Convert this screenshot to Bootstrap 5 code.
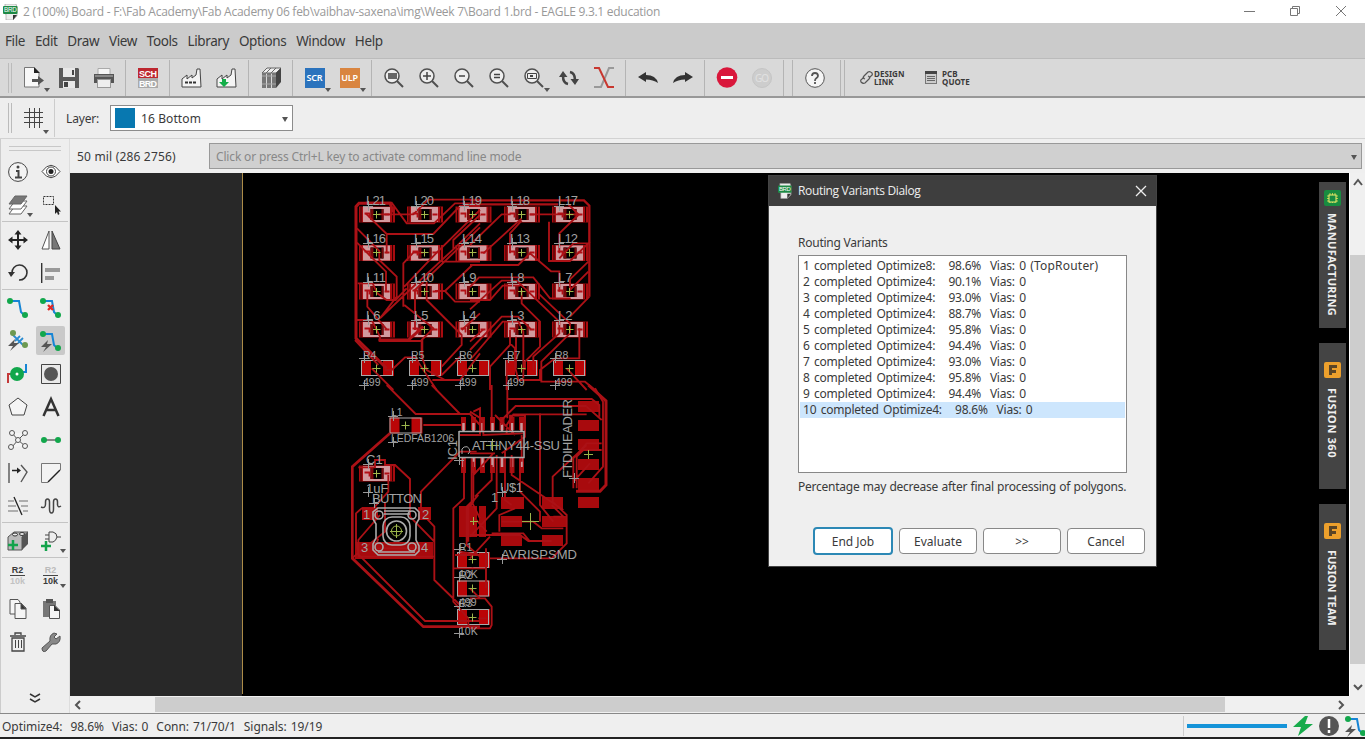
<!DOCTYPE html>
<html lang="en">
<head>
<meta charset="utf-8">
<title>EAGLE board editor</title>
<link href="https://cdn.jsdelivr.net/npm/bootstrap@5.3.0/dist/css/bootstrap.min.css" rel="stylesheet">
<style>
body{width:1365px;height:739px;overflow:hidden;font:12px/16px "Noto Sans","Open Sans",sans-serif;color:#3a3a3a;background:#efefef;white-space:nowrap}
svg{display:block;overflow:visible;flex:none}
.titlebar{height:23px;background:#fff;color:#999;font:12px/23px "Open Sans",sans-serif;padding-left:3px;letter-spacing:-.265px}
.titlebar .cap{width:46px}
.menus{height:36px;background:#cbcbcb;font-size:13.5px;letter-spacing:-.4px;gap:9.9px;padding:0 0 0 5px;border-bottom:1px solid #bbb}
.tools{height:39px;background:#d9d9d9;border-bottom:2px solid #989898}
.tools .cell{width:35px;height:37px;display:flex;align-items:center;justify-content:center;position:relative}
.vsep{width:9px;height:36px;display:flex;justify-content:center}
.vsep::before{content:"";width:1px;background:#b4b4b4}
.grip{width:4px;height:30px;border-left:1px solid #bbb;border-right:1px solid #bbb;margin-left:8px;margin-right:4px}
.drop{position:absolute;right:1px;bottom:4px;width:0;border:3px solid transparent;border-top:4px solid #555;border-bottom:0}
.chip{width:20px;height:20px;color:#fff;font:600 9px/20px "Noto Sans",sans-serif;text-align:center;letter-spacing:-.2px}
.tiny{font:bold 8px/8px "Noto Sans",sans-serif;letter-spacing:.05px}
.layerbar{height:41px;background:#eee;border-bottom:1px solid #d2d2d2}
.layersel{width:183px;height:26px;background:#fff;border:1px solid #8c8c8c;padding:2px 4px 0}
.swatch{width:20px;height:20px;background:#0878b0;margin-top:-2px}
.tri{width:0;border:3px solid transparent;border-top:5px solid #555;border-bottom:0}
.work{height:574px}
.palette{width:70px;border-left:1px solid #ccc;border-right:1px solid #ddd;background:#eee}
.palette .pair{display:grid;grid-template-columns:33px 33px;height:33px}
.palette .pair>div{display:flex;align-items:center;justify-content:center;position:relative}
.palette .active{background:#c9c9c9;border-radius:2px;height:29px;width:29px;margin:2px}
.hsep{height:2px;border-top:1px solid #c4c4c4;margin:0 1px}
.r2{font:bold 9px/10px "Liberation Sans",sans-serif;text-align:center}
.r2 b{display:block;border-bottom:1px solid #444}
.cmdrow{height:34px;background:#efefef}
.cmd{height:26px;width:1153px;background:#d0d0d0;border:1px solid #999;color:#888;padding:2px 4px 0 6px;letter-spacing:-.16px}
.board{width:1279px;height:523px;background:#000;position:relative}
.sidetab{position:absolute;left:1249px;width:27px;height:146px;background:#444;color:#eee;font:bold 11px/27px "Noto Sans",sans-serif;writing-mode:vertical-rl}
.vbar{width:16px;height:523px;background:#f0f0f0;border-left:1px solid #fff}
.vthumb{height:409px;background:#cdcdcd}
.hbar{height:17px;background:#f0f0f0}
.hthumb{width:1070px;height:15px;background:#cdcdcd}
.status{height:26px;border-top:1px solid #888;border-bottom:2px solid #222;background:#efefef;padding-left:2px}
.dlg{position:absolute;left:768px;top:175px;width:389px;height:392px;background:#efefef;border:1px solid #444}
.dlghead{height:30px;background:#3e3e3e;color:#eee;font:12px/30px "Open Sans",sans-serif;padding:0 9px;letter-spacing:-.34px}
.variants{width:329px;height:218px;background:#fff;border:1px solid #888;padding:2px 1px;margin-left:29px;letter-spacing:-.22px;word-spacing:1.5px}
.variants li{height:16px;padding:0 3px;white-space:pre}
.variants .on{background:#cde6fd}
.dlgbtn{width:78px;height:26px;border:1px solid #888;border-radius:4px;background:#fff;font-size:12px;line-height:16px;color:#3a3a3a;padding:1px 0 0}
.dlgbtn.main{border:2px solid #2c88b5;width:80px;height:28px}
.brdtext{font:13px "Liberation Sans",sans-serif;fill:#a2a2a2}
.brdtext .small-label{font-size:10.5px}
</style>
<script src="https://cdn.jsdelivr.net/npm/bootstrap@5.3.0/dist/js/bootstrap.bundle.min.js"></script>
</head>
<body>
<svg width="0" height="0" class="position-absolute">
<defs>
<symbol id="brd" viewBox="0 0 15 16"><path d="M2 0H13L14 3V12L10 16H3V10H2Z" fill="#eee" stroke="#999" stroke-width=".6"/><path d="M14 11H10V16Z" fill="#333"/><rect y="2" width="14.500" height="8" rx="1" fill="#1e8a45"/><text x="1" y="8.300" font-family="Liberation Sans" font-size="6.500" textLength="12.500" lengthAdjust="spacingAndGlyphs" fill="#fff">BRD</text></symbol>
<symbol id="lens" viewBox="0 0 20 20"><circle cx="8" cy="8" r="7" fill="#eee" stroke="#505050" stroke-width="1.5"/><path d="M13 13L19 19" stroke="#505050" stroke-width="2"/></symbol>
<symbol id="plant" viewBox="0 0 21 20"><path d="M1 19V11L6 7V11L11 7V10L15 7L16 1H19L20 19Z" fill="#f4f4f4" stroke="#444"/></symbol>
<g id="led"><rect x="-17.500" y="-8" width="36" height="16" fill="#a80c10"/><path d="M-15.500 -8V8M16 -8V8" stroke="#300"/><rect x="-13.500" y="-7.500" width="27" height="15" fill="#d29a9e"/><rect x="-6" y="-5.500" width="13" height="11"/><path d="M-6 -5.500H-3V5.500H-6ZM5 -5.500H7V5.500H5Z" fill="#7a080b"/></g>
<g id="res"><rect x="-16" y="-8" width="10" height="16" fill="#ba0507"/><rect x="6" y="-8" width="11" height="16" fill="#ba0507"/><rect x="-15.500" y="-7.500" width="31" height="15" fill="none" stroke="#aaa"/></g>
<g id="ledmark"><path d="M-12 -1H-7V3M8 0H13" stroke="#b20f15" stroke-width="1.800" fill="none"/><path d="M-3.500 0H4M0 -3.500V4" stroke="#a4b94c"/></g>
<path id="resmark" d="M-4 0H4M0 -4V4" stroke="#9cb64c"/>
<path id="plus" d="M-5 0.500H5M0.500 -5V5" stroke="#999"/>
<g id="route"><path d="M3 4H12L14 15L19 20" fill="none" stroke="#1685d5" stroke-width="2"/><circle cx="3" cy="4" r="3" fill="#12a74c"/><circle cx="18" cy="18" r="3" fill="#12a74c"/></g>
<path id="bolt" d="M7 0L0 7H5L2 12L11 4H6Z" fill="#555"/>
<g id="ledrow"><use href="#led" x="376.500"/><use href="#led" x="424.500"/><use href="#led" x="473"/><use href="#led" x="521.500"/><use href="#led" x="569.500"/></g>
<g id="markrow"><use href="#ledmark" x="376.500"/><use href="#ledmark" x="424.500"/><use href="#ledmark" x="472.500"/><use href="#ledmark" x="521.500"/><use href="#ledmark" x="569.500"/></g>
<g id="plusrow"><use href="#plus" x="368"/><use href="#plus" x="416"/><use href="#plus" x="464"/><use href="#plus" x="512"/><use href="#plus" x="559"/></g>
</defs></svg>

<header class="titlebar d-flex align-items-center">
 <svg width="15" height="16"><use href="#brd"/></svg>
 <span class="me-auto" style="margin-left:5px">2 (100%) Board - F:\Fab Academy\Fab Academy 06 feb\vaibhav-saxena\img\Week 7\Board 1.brd - EAGLE 9.3.1 education</span>
 <span class="cap"><svg width="46" height="22" stroke="#777" fill="none"><path d="M17 10.500H28"/></svg></span>
 <span class="cap"><svg width="46" height="22" stroke="#777" fill="none"><path d="M17.500 7.500H24.500V14.500H17.500ZM19.500 7V5.500H26.500V12.500H25"/></svg></span>
 <span class="cap"><svg width="46" height="22" stroke="#777" fill="none"><path d="M17 5L27 15M27 5L17 15"/></svg></span>
</header>
<nav class="menus d-flex align-items-center"><span>File</span><span>Edit</span><span>Draw</span><span>View</span><span>Tools</span><span>Library</span><span>Options</span><span>Window</span><span>Help</span></nav>

<div class="tools d-flex align-items-center">
 <div class="grip"></div>
 <div class="cell"><svg width="21" height="21"><path d="M1.500 .5H11L16 6V20H1.500Z" fill="#f8f8f8" stroke="#777"/><path d="M11 0V6H17Z" fill="#222"/><path d="M9 13.500H17" stroke="#555" stroke-width="3"/><path d="M15 9L21 13.500L15 18Z" fill="#555"/></svg><i class="drop"></i></div>
 <div class="cell"><svg width="20" height="20"><path d="M0 0H19L20 1V20H0Z" fill="#595959"/><path d="M4 0H16V9H4ZM4 13H16V20H4Z" fill="#e8e8e8"/><path d="M13 2H15V7H13ZM5 14H9V19H5Z" fill="#444"/></svg></div>
 <div class="cell"><svg width="20" height="20"><path d="M4 .5H16V7H4Z" fill="#f5f5f5" stroke="#aaa"/><path d="M0 6H20V15H0Z" fill="#555"/><path d="M1 7H19V9H1Z" fill="#888"/><path d="M3 11H17V20H3Z" fill="#999"/><path d="M4 12H16V19H4Z" fill="#eee"/></svg></div>
 <div class="vsep"></div>
 <div class="cell"><svg width="20" height="20"><path d="M0 0H20V10H0Z" fill="#bd2730"/><path d="M0 10H20V20H0Z" fill="#aaa"/><g font-family="Liberation Sans" font-weight="bold" font-size="9" fill="#fff"><text x="1" y="8.500" textLength="18">SCH</text><text x="1" y="18.500" textLength="18">BRD</text></g></svg></div>
 <div class="vsep"></div>
 <div class="cell"><svg width="21" height="20"><use href="#plant"/><path d="M4 14.500H16" stroke="#333" stroke-width="2" stroke-dasharray="3 1"/></svg></div>
 <div class="cell"><svg width="21" height="20"><use href="#plant"/><path d="M6 11H10V14H13L8 19L3 14H6Z" fill="#13ae49"/></svg></div>
 <div class="vsep"></div>
 <div class="cell"><svg width="20" height="20"><path d="M1 5L6 0H20L15 5Z" fill="#eee" stroke="#666"/><path d="M1 5H5V20H1ZM6 5H10V20H6ZM11 5H15V20H11Z" fill="#777"/><path d="M15 5L20 0V14L15 20Z" fill="#444"/><path d="M5 5L10 0M10 5L15 0" stroke="#666"/><path d="M1 8H15M1 16H15" stroke="#aaa"/></svg></div>
 <div class="vsep"></div>
 <div class="cell"><div class="chip" style="background:#2b73bd">SCR</div><i class="drop"></i></div>
 <div class="cell"><div class="chip" style="background:#d98540">ULP</div><i class="drop"></i></div>
 <div class="vsep"></div>
 <div class="cell"><svg width="20" height="20"><use href="#lens"/><rect x="4" y="5" width="9" height="6" fill="#666"/></svg></div>
 <div class="cell"><svg width="20" height="20"><use href="#lens"/><path d="M4 8H12M8 4V12" stroke="#444" stroke-width="1.500"/></svg></div>
 <div class="cell"><svg width="20" height="20"><use href="#lens"/><path d="M5 8H11" stroke="#444" stroke-width="1.500"/></svg></div>
 <div class="cell"><svg width="20" height="20"><use href="#lens"/><path d="M5 6.500H11M5 9.500H11" stroke="#444" stroke-width="1.500"/></svg></div>
 <div class="cell"><svg width="20" height="20"><use href="#lens"/><path d="M3.500 5.500H12.500V10.500H3.500Z" stroke="#444" fill="none"/><path d="M6 7H9V9H6Z" fill="#444"/></svg><i class="drop"></i></div>
 <div class="cell"><svg width="20" height="18"><path d="M9 15Q4 14 4 7M11 3Q16 4 16 11" fill="none" stroke="#444" stroke-width="2.600"/><path d="M0 8L4 2L8.500 8ZM11.500 10H20L16 16Z" fill="#444"/></svg></div>
 <div class="cell"><svg width="20" height="21" fill="none"><path d="M20 1H15L7 20H0" stroke="#999" stroke-width="2"/><path d="M0 1H5L14 20H20" stroke="#c8372f" stroke-width="2"/></svg></div>
 <div class="vsep"></div>
 <div class="cell"><svg width="20" height="13"><path d="M0 6L8 1V4Q18 4 20 12Q15 8.500 8 8.500V11Z" fill="#333"/></svg></div>
 <div class="cell"><svg width="20" height="13"><path d="M20 6L12 1V4Q2 4 0 12Q5 8.500 12 8.500V11Z" fill="#333"/></svg></div>
 <div class="vsep"></div>
 <div class="cell"><svg width="20" height="21"><circle cx="10" cy="10.500" r="10.300" fill="#d9173b"/><path d="M4 10.500H16" stroke="#fff" stroke-width="3"/></svg></div>
 <div class="cell"><svg width="20" height="20"><circle cx="10" cy="10" r="9.500" fill="#cdcdcd" stroke="#c5c5c5"/><text x="3" y="14" font-size="10" textLength="14" fill="#e1e1e1">GO</text></svg></div>
 <div class="vsep"></div><div class="vsep"></div>
 <div class="cell"><svg width="20" height="20"><circle cx="10" cy="10" r="9.300" fill="#f5f5f5" stroke="#555"/><path d="M7 8Q7 5 10 5T13 8Q13 9 11 10.500Q10 11 10 13M10 14V16" fill="none" stroke="#555" stroke-width="1.800"/></svg></div>
 <div class="vsep ms-1"></div><div class="vsep" style="margin-left:-5px"></div>
 <svg width="12" height="13" style="margin-left:11px" fill="none" stroke="#555" stroke-width="1.200"><path d="M5 8Q2 7 4 5L8 1Q10 0 12 2Q13 4 11 5L9 7M8 5Q11 6 9 8L5 12Q3 13 1 11Q0 9 2 8L4 6"/></svg>
 <div class="tiny" style="margin-left:2px;width:31px">DESIGN<br>LINK</div>
 <svg width="12" height="13" style="margin-left:20px"><rect x=".5" y=".5" width="11" height="12" fill="#ccc" stroke="#777"/><path d="M0 0H12V3H0Z" fill="#444"/><path d="M2 5.500H10M2 7.500H10M2 9.500H10" stroke="#666"/></svg>
 <div class="tiny" style="margin-left:5px">PCB<br>QUOTE</div>
</div>

<div class="layerbar d-flex align-items-center">
 <div class="grip"></div>
 <div class="position-relative d-flex align-items-center" style="width:39px;height:38px;border-right:1px solid #ccc"><svg width="19" height="21" style="margin-left:8px" stroke="#444"><path d="M5.500 0V20M10.500 0V20M15.500 0V20M0 4.500H19M0 9.500H19M0 14.500H19"/></svg><i class="drop" style="right:5px;bottom:3px"></i></div>
 <span style="margin-left:11px;width:44px;padding-top:2px;letter-spacing:-.15px">Layer:</span>
 <div class="layersel d-flex align-items-center"><div class="swatch"></div><span style="margin-left:6px;letter-spacing:.1px">16 Bottom</span><i class="tri ms-auto"></i></div>
</div>

<main class="work d-flex">
 <aside class="palette">
  <div style="height:16px;padding:7px 8px"><div style="height:5px;border:solid #c8c8c8;border-width:1px 0"></div></div>
  <div class="pair"><div><svg width="20" height="20"><circle cx="10" cy="10" r="9.400" fill="#f3f3f3" stroke="#444"/><circle cx="10" cy="5" r="1.500" fill="#444"/><path d="M8 9H10.500V15M7 15.500H14" stroke="#444" stroke-width="2" fill="none"/></svg></div><div><svg width="20" height="15"><path d="M1 7.500Q10 -5 19 7.500Q10 20 1 7.500Z" fill="#fff" stroke="#444"/><circle cx="10" cy="7.500" r="4.500" fill="none" stroke="#444"/><circle cx="10" cy="7.500" r="2.500" fill="#222"/></svg></div></div>
  <div class="pair"><div><svg width="20" height="20"><g stroke="#666" fill="#fff"><path d="M1 19L7 11H19L13 19Z"/><path d="M1 14L7 6H19L13 14Z"/><path d="M1 9L7 1H19L13 9Z" fill="#777"/></g></svg><i class="drop"></i></div><div><svg width="20" height="20"><path d="M2.500 1.500H12.500V9.500H2.500Z" fill="none" stroke="#333" stroke-dasharray="2 1"/><path d="M14 10V19L16 17L17 20L18.500 19L17.500 16.500H20Z" fill="#222"/></svg></div></div>
  <div class="hsep"></div>
  <div class="pair"><div><svg width="20" height="20"><path d="M10 3V17M3 10H17" stroke="#222" stroke-width="2"/><path d="M10 0L6.500 4.500H13.500ZM10 20L6.500 15.500H13.500ZM0 10L4.500 6.500V13.500ZM20 10L15.500 6.500V13.500Z" fill="#222"/></svg></div><div><svg width="20" height="20"><path d="M8 1V19H1Z" fill="#fff" stroke="#555"/><path d="M11 1V19H19Z" fill="#777" stroke="#444"/></svg></div></div>
  <div class="pair"><div><svg width="20" height="20"><path d="M4 10A7.500 7.500 0 1 1 11 17" fill="none" stroke="#333" stroke-width="1.600"/><path d="M0 9H7L3 14Z" fill="#333"/></svg></div><div><svg width="20" height="20"><path d="M.7 0V20" stroke="#333" stroke-width="1.400"/><path d="M4 5H19V9H4ZM4 13H13V17H4Z" fill="#999"/></svg></div></div>
  <div class="hsep"></div>
  <div class="pair"><div><svg width="21" height="21"><use href="#route"/></svg></div><div><svg width="21" height="21"><use href="#route"/><path d="M8 8L13 13M13 8L8 13" stroke="#e32726" stroke-width="2.300"/></svg></div></div>
  <div class="pair"><div><svg width="21" height="21"><path d="M5 4L18 17M8 11L13 6M11 13L16 8" stroke="#298bd0" stroke-width="1.800"/><circle cx="6" cy="3" r="3" fill="#6d9950"/><circle cx="18" cy="15" r="3" fill="#6d9950"/><use href="#bolt" x="1" y="9"/></svg></div><div class="active"><svg width="21" height="21"><use href="#route"/><use href="#bolt" x="1" y="10"/></svg></div></div>
  <div class="pair"><div><svg width="21" height="21" fill="none"><path d="M1 20V11H9" stroke="#c43a3a" stroke-width="2"/><path d="M19 1V9H12" stroke="#1685d5" stroke-width="2"/><circle cx="10" cy="11" r="7" fill="#12a74c"/><circle cx="10" cy="11" r="1.500" fill="#fff"/></svg></div><div><svg width="20" height="20"><path d="M.5 .5H19.500V19.500H.5Z" fill="#e9e9e9" stroke="#444"/><circle cx="10" cy="10" r="7" fill="#555"/></svg></div></div>
  <div class="pair"><div><svg width="20" height="20"><path d="M10 1L19 8L16 18H4L1 8Z" fill="#f5f5f5" stroke="#444"/></svg></div><div><svg width="18" height="18"><path d="M1.500 18L9 1L16.500 18M4 12H14" fill="none" stroke="#333" stroke-width="2.500"/></svg></div></div>
  <div class="pair"><div><svg width="20" height="20" fill="#f4f4f4" stroke="#555"><path d="M4 3L10 10L17 3M4 17L10 10L17 16"/><circle cx="4" cy="3" r="2.500"/><circle cx="17" cy="3" r="2.500"/><circle cx="10" cy="10" r="2.500"/><circle cx="3" cy="17" r="2.500"/><circle cx="17" cy="16" r="2.500"/></svg></div><div><svg width="20" height="8"><path d="M3 4H17" stroke="#888" stroke-width="2"/><circle cx="3" cy="4" r="3" fill="#12a74c"/><circle cx="17" cy="4" r="3" fill="#12a74c"/></svg></div></div>
  <div class="pair"><div><svg width="20" height="20" fill="none" stroke="#555"><path d="M1 0V20M13 2L19 9L13 19" stroke-width="1.400"/><path d="M4 7.500H11" stroke="#222" stroke-width="1.500"/><path d="M9 4.500L13 7.500L9 10.500Z" fill="#222" stroke="none"/></svg></div><div><svg width="20" height="20" fill="#f3f3f3"><path d="M7 19.500H.5V.5H19.500V7" stroke="#777"/><path d="M7 19L19 7" stroke="#222" stroke-width="1.500"/></svg></div></div>
  <div class="pair"><div><svg width="20" height="20"><path d="M0 5H6M11 5H20M0 10H8M13 10H20M0 15H10M15 15H20" stroke="#999" stroke-width="1.300"/><path d="M6 1L14 19" stroke="#222" stroke-width="1.300"/></svg></div><div><svg width="20" height="16"><path d="M0 9Q4.500 11 4.500 6V4Q4.500 1 6.500 1T8.500 4V11Q8.500 15 10.500 15T12.500 11V4Q12.500 1 14.500 1T16.500 4V7Q17 10 20 8" fill="none" stroke="#444" stroke-width="1.500"/></svg></div></div>
  <div class="hsep"></div>
  <div class="pair"><div><svg width="20" height="20"><path d="M0 6L6 1H20L14 6V19H0Z" fill="#bbb" stroke="#555"/><path d="M14 6L20 1V13L14 19Z" fill="#555"/><ellipse cx="7" cy="3.500" rx="2.500" ry="1.500" fill="#eee" stroke="#333"/><ellipse cx="14" cy="3" rx="2.500" ry="1.500" fill="#eee" stroke="#333"/><path d="M5 9V19M0 14H10" stroke="#13a34b" stroke-width="2.500"/></svg></div><div><svg width="20" height="20"><path d="M8 1H12Q16 2 16 6Q15 10 12 11H8ZM4 4H8M4 8H8M16 6H20" fill="none" stroke="#444"/><path d="M5 10V20M0 15H10" stroke="#13a34b" stroke-width="2.500"/></svg><i class="drop"></i></div></div>
  <div class="hsep"></div>
  <div class="pair"><div><div class="r2"><b>R2</b><span style="color:#c2c2c2">10k</span></div></div><div><div class="r2"><b style="color:#bbb">R2</b>10k</div><i class="drop"></i></div></div>
  <div class="pair"><div><svg width="18" height="20" fill="#f5f5f5" stroke="#555"><path d="M1 .5H9L11 3V15H1Z"/><path d="M6 4.500H12L17 9V19.500H6Z"/><path d="M12 4V10H17Z" fill="#333"/></svg></div><div><svg width="18" height="20"><path d="M1 2H14V18H1Z" fill="#777"/><path d="M4 0H11V4H4Z" fill="#555"/><path d="M7.500 6.500H13L17.500 11V19.500H7.500Z" fill="#f5f5f5" stroke="#555"/><path d="M12 6V12H18Z" fill="#333"/></svg></div></div>
  <div class="pair"><div><svg width="16" height="20" fill="none" stroke="#444"><path d="M0 4H16M5 3V1H11V3M2 6V19H14V6Z" stroke-width="1.300"/><path d="M5.500 8V16M8.500 8V16M11.500 8V16"/></svg></div><div><svg width="20" height="20"><path d="M1 16L9 9Q8 3 13 1L16 2L13 5L15 7L19 4Q20 10 15 12L11 12L5 19Q1 21 1 16Z" fill="#888" stroke="#555"/></svg></div></div>
  <svg width="10" height="9" style="margin:36px 0 0 29px" fill="none" stroke="#333" stroke-width="1.500"><path d="M0 0L5 3L10 0M0 5L5 8L10 5"/></svg>
 </aside>
 <section>
  <div class="cmdrow d-flex align-items-center"><span style="width:139px;padding:2px 0 0 7px;letter-spacing:.18px">50 mil (286 2756)</span><div class="cmd d-flex align-items-center"><span>Click or press Ctrl+L key to activate command line mode</span><i class="tri ms-auto"></i></div></div>
  <div class="d-flex">
   <div class="board">
    <svg width="1279" height="523" viewBox="70 173 1279 523">
     <rect x="70" y="173" width="172" height="523" fill="#282828"/><path d="M242.500 173V694" stroke="#ac8c48"/>
     <g>
      <use href="#ledrow" y="214.500"/><use href="#ledrow" y="253"/><use href="#ledrow" y="291.500"/><use href="#ledrow" y="329.500"/>
      <use href="#res" x="377" y="368"/><use href="#res" x="425" y="368"/><use href="#res" x="473" y="368"/><use href="#res" x="521" y="368"/><use href="#res" x="569" y="368"/>
      <use href="#res" x="405.500" y="425.500"/><use href="#led" x="376.500" y="473.500"/>
      <use href="#res" x="473" y="560"/><use href="#res" x="473" y="588.500"/><use href="#res" x="473" y="617"/>
      <path fill="#a80a0d" d="M578 401h21v11h-21zM578 420h21v11h-21zM578 439h21v11h-21zM578 459h21v11h-21zM578 478h21v12h-21zM578 497h21v11h-21zM501 497h23v12h-23zM501 516h21v11h-21zM501 535h21v11h-21zM542 497h21v12h-21zM542 516h24v11h-24zM542 535h21v11h-21zM459 506h8v31h-8zM469 506h8v31h-8zM479 506h7v31h-7zM362 507h16v13h-16zM418 507h13v13h-13zM355 542h78v17h-78z"/>
      <path stroke="#a80a0d" stroke-width="5" d="M463.500 417V430M473.500 417V430M482.500 417V430M492.500 417V430M502 417V430M512 417V430M521.500 417V430M463.500 457V473M473.500 457V473M482.500 457V473M492.500 457V473M502 457V473M512 457V473M521.500 457V473"/>
      <path stroke="#c7999d" stroke-width="2.500" d="M463.500 423V431M473.500 423V431M482.500 423V431M492.500 423V431M502 423V431M512 423V431M521.500 423V431M463.500 458V467M473.500 458V467M482.500 458V467M492.500 458V467M502 458V467M512 458V467M521.500 458V467"/>
     </g>
     <g fill="none" stroke="#ab1116" stroke-width="5.600">
      <g transform="translate(345 190) scale(.33333)">
       <path stroke-width="9" d="M145 67L135 40H42L33 50V445L125 535M100 450H190L235 410"/>
       <path d="M62 38H140L185 100H267L330 40H405M100 73H205L250 29H405M62 70L125 132H265L345 48H405M125 130V190M36 115L103 183V210L155 260V320L105 385M36 158L123 245V305M38 280H83L97 310L125 330H152L185 295M67 300V350L125 418M35 390H80L105 440V453H232V500M235 188H205L175 220V350M178 290L275 188L405 60M178 315L325 178L405 100M210 420V300L405 112M270 303H300L330 335H405M300 303L382 225H405M245 275V330L350 435V465L290 530M178 345L265 415L230 450V500L245 540L300 570M30 450L100 525M80 535L145 600M120 540H140L180 502H210L275 600M105 385L178 315M350 420L405 370M290 555L345 500M262 570H345L405 490M290 215H405M325 180V150L405 75"/>
      </g>
      <g transform="translate(470 190) scale(.33333)">
       <path stroke-width="7" d="M0 31H342L358 47V320M0 43H265"/>
       <path d="M180 73H325L295 43M120 190V130L155 92M0 165L95 73H122M40 190L155 85M237 95V213H300L355 160H310L268 205M268 190V130L325 75M355 215L300 268V300L355 245M0 225H145L180 190L243 244H268V305M0 291L27 262H190L240 325H302M0 330H60L98 287H150M0 358L95 272H140L268 395V430L190 500V540M155 300V340L210 395V470L165 515V540M205 310L300 400V430M0 455L40 418M0 480L95 380H145L183 418M0 510L98 395H145L160 425V565M120 420V465L60 530V600M138 440V535M328 415V505H255L210 540V570H145L135 530V475L120 460M358 320L300 380M300 430L214 515V575H345L375 600M290 535L350 600M110 510V600"/>
      </g>
      <g transform="translate(345 385) scale(.33333)">
       <path stroke-width="8" d="M135 145L22 245V520L235 725H405"/>
       <path d="M22 520L37 505L240 708H405M125 0L212 87H375L405 120M260 0L345 87M235 120H350M40 247H90V225H120V240H150L195 282V395L268 470V585L345 660M130 270V320L85 370H50L33 385V470L42 515H265M105 390L40 465V510M45 500L120 440V350M228 370V320L345 200H395M228 370L245 400L268 425V500M357 220V340L325 370V650L370 700V725M380 220V350L365 365V480L405 515M400 330L370 365V470M330 510H405M325 550H385M100 460L90 490H215M405 400L380 350M345 500L405 510M345 150H405V70L385 80"/>
      </g>
      <g transform="translate(470 385) scale(.33333)">
       <path stroke-width="9" d="M355 0L408 48V300L390 319H318"/>
       <path d="M375 10L399 50V245L355 295M65 0V105M112 0V100M112 42H365L388 60V95M95 120V105L137 63H350M110 145V120L130 88H350M120 140V92H165V155L95 205M210 85V360L250 410M0 80L40 105V150L160 145M10 230V350L0 365M65 240V285L15 335M80 210V370L0 455M105 200V345L125 360M125 210V270L280 375M150 220V320L210 380V410M350 65L395 105M395 175H350L310 220V310M395 195H340L320 215V310M360 235L310 290M350 180L248 275V350M248 350L290 390V475L245 520H60M245 360L280 395H250M135 370L88 390V440M15 400L50 440M0 450H90M95 410H190L215 430H280M0 520L60 455M50 450H150L175 468H245M48 490V610M65 445H160L180 470M5 550H50M0 640H45L65 665V720L60 730H0M25 700H50M0 610L30 640M75 90L135 150M70 205L10 270M155 150V230M0 205H75"/>
      </g>
     </g>
     <g>
      <use href="#markrow" y="214.500"/><use href="#markrow" y="252.500"/><use href="#markrow" y="291.500"/><use href="#markrow" y="329.500"/><use href="#ledmark" x="376.500" y="473.500"/>
      <use href="#resmark" x="376.500" y="368.500"/><use href="#resmark" x="424.500" y="368.500"/><use href="#resmark" x="472.500" y="368.500"/><use href="#resmark" x="521.500" y="368.500"/><use href="#resmark" x="569.500" y="368.500"/><use href="#resmark" x="405.500" y="425.500"/><use href="#resmark" x="472.500" y="559.500"/><use href="#resmark" x="472.500" y="588.500"/><use href="#resmark" x="472.500" y="617.500"/>
     </g>
     <g fill="none" stroke="#aaa">
      <path stroke-width="1.500" d="M459 431V457M459 431.500H524V457.500H459"/><path d="M462 454V452A4 4 0 1 1 468 454"/>
      <g stroke-width="1.600"><path d="M378 508H415L419 512V519L416 524V540L419 546V551L415 555H378L373 550V544L376 538V524L373 519V512ZM384 511H410M384 514H410M378 552H415"/><rect x="383" y="517" width="27" height="28" rx="9"/><circle cx="396.500" cy="531" r="10"/><circle cx="396.500" cy="531" r="5" stroke="#a4b94c" stroke-width="1"/><circle cx="379" cy="515" r="4"/><circle cx="412" cy="515" r="4"/><circle cx="379" cy="547" r="4"/><circle cx="412" cy="547" r="4"/></g>
      <path stroke="#9cb64c" d="M390 531.500H403M396.500 524V538M486 445.500H499M492.500 439V451M584 454.500H593M588.500 450V459M522 521.500H539M530.500 513V530M470 521.500H478M473.500 517V525"/>
     </g>
     <g>
      <use href="#plusrow" y="206"/><use href="#plusrow" y="243"/><use href="#plusrow" y="282"/><use href="#plusrow" y="320"/><use href="#plusrow" x="-4" y="358"/><use href="#plusrow" x="-4" y="385"/>
      <use href="#plus" x="393" y="416"/><use href="#plus" x="393" y="442"/><use href="#plus" x="368" y="464"/><use href="#plus" x="368" y="492"/><use href="#plus" x="374" y="503"/><use href="#plus" x="502" y="492"/><use href="#plus" x="502" y="559"/><use href="#plus" x="574" y="478"/><use href="#plus" x="459" y="549"/><use href="#plus" x="459" y="577"/><use href="#plus" x="459" y="606"/><use href="#plus" x="459" y="633"/><use href="#plus" x="459" y="460"/>
     </g>
     <g class="brdtext">
      <text x="366" y="205" textLength="20">L21</text><text x="414" y="205" textLength="20">L20</text><text x="462" y="205" textLength="20">L19</text><text x="510" y="205" textLength="20">L18</text><text x="558" y="205" textLength="20">L17</text>
      <text x="366" y="243" textLength="20">L16</text><text x="414" y="243" textLength="20">L15</text><text x="462" y="243" textLength="20">L14</text><text x="510" y="243" textLength="20">L13</text><text x="558" y="243" textLength="20">L12</text>
      <text x="366" y="282" textLength="20">L11</text><text x="414" y="282" textLength="20">L10</text><text x="462" y="282">L9</text><text x="510" y="282">L8</text><text x="558" y="282">L7</text>
      <text x="366" y="320">L6</text><text x="414" y="320">L5</text><text x="462" y="320">L4</text><text x="510" y="320">L3</text><text x="558" y="320">L2</text>
      <g class="small-label"><text x="363" y="359">R4</text><text x="411" y="359">R5</text><text x="459" y="359">R6</text><text x="507" y="359">R7</text><text x="555" y="359">R8</text><text x="363" y="386">499</text><text x="411" y="386">499</text><text x="459" y="386">499</text><text x="507" y="386">499</text><text x="555" y="386">499</text><text x="391" y="416">L1</text><text x="391" y="442" textLength="63">LEDFAB1206</text><text x="459" y="551">R1</text><text x="459" y="578">10K</text><text x="459" y="606">499</text><text x="459" y="635">10K</text><text x="459" y="579">R2</text><text x="459" y="607">R3</text></g>
      <text x="366" y="464">C1</text><text x="366" y="493">1uF</text><text x="372" y="503" textLength="50">BUTTON</text><text x="363" y="519">1</text><text x="422" y="519">2</text><text x="361" y="552">3</text><text x="421" y="552">4</text><text x="472" y="450" textLength="88">ATTINY44-SSU</text><text x="500" y="492" textLength="23">U$1</text><text x="491" y="502">1</text><text x="501" y="559" textLength="76">AVRISPSMD</text><text transform="translate(457 460) rotate(-90)" textLength="20">IC1</text><text transform="translate(572 478) rotate(-90)" textLength="79">FTDIHEADER</text>
     </g>
    </svg>
    <div class="sidetab d-flex align-items-center" style="top:9px;padding-top:8px"><svg width="17" height="17"><rect width="17" height="16" rx="2" fill="#188c40"/><path d="M3 6H14M3 8.500H14M3 11H14M6 3V13M8.500 3V13M11 3V13" stroke="#e8d84b" stroke-width=".8"/><rect x="5" y="5" width="7" height="7" fill="#188c40" stroke="#f0ee70"/></svg><span style="margin-top:6px;letter-spacing:.35px">MANUFACTURING</span></div>
    <div class="sidetab d-flex align-items-center" style="top:170px;padding-top:19px"><svg width="17" height="17"><rect width="17" height="16" rx="2" fill="#eda02c"/><path d="M5 3H13V6H8V8H12V11H8V13H5Z" fill="#5b4526"/></svg><span style="margin-top:9px;letter-spacing:.6px">FUSION 360</span></div>
    <div class="sidetab d-flex align-items-center" style="top:331px;padding-top:19px"><svg width="17" height="17"><rect width="17" height="16" rx="2" fill="#eda02c"/><path d="M5 3H13V6H8V8H12V11H8V13H5Z" fill="#5b4526"/></svg><span style="margin-top:10px">FUSION TEAM</span></div>
   </div>
   <div class="vbar"><svg width="15" height="82"><path d="M4 12L8 7L12 12" fill="none" stroke="#555" stroke-width="2"/></svg><div class="vthumb"></div><svg width="15" height="32"><path d="M4 21L8 25L12 21" fill="none" stroke="#555" stroke-width="2"/></svg></div>
  </div>
  <div class="hbar d-flex align-items-center"><svg width="85" height="16"><path d="M10 4L6 8L10 12" fill="none" stroke="#555" stroke-width="2"/></svg><div class="hthumb"></div><svg width="140" height="16"><path d="M114 4L118 8L114 12" fill="none" stroke="#555" stroke-width="2"/></svg></div>
 </section>
</main>
<footer class="status d-flex align-items-center"><span class="me-auto" style="white-space:pre;letter-spacing:-.05px;word-spacing:.9px;padding-top:2px">Optimize4:  98.6%  Vias: 0  Conn: 71/70/1  Signals: 19/19</span>
 <div style="border-left:1px solid #ccc;height:20px;padding:8px 5px 0 3px"><div style="width:100px;height:4px;background:#1593d8"></div></div>
 <svg width="20" height="20" style="margin-left:1px;margin-right:6px"><path d="M12 0L0 11H8L5 20L20 8H12L15 0Z" fill="#17ab4b"/></svg>
 <svg width="20" height="20" style="margin-right:6px"><circle cx="10" cy="10" r="10" fill="#555"/><path d="M10 3V12M10 14V17" stroke="#fff" stroke-width="2.500"/></svg>
 <svg width="20" height="20"><use href="#route" y="-1"/><use href="#bolt" x="0" y="9"/></svg>
</footer>

<div class="dlg">
 <div class="dlghead d-flex align-items-center"><svg width="14" height="16"><use href="#brd"/></svg><span style="margin-left:6px">Routing Variants Dialog</span><svg class="ms-auto" width="12" height="12" stroke="#eee" stroke-width="1.300"><path d="M1 1L11 11M11 1L1 11"/></svg></div>
 <div style="margin:29px 0 4px 29px;letter-spacing:-.25px">Routing Variants</div>
 <ul class="variants list-unstyled mb-0">
  <li>1 completed Optimize8:   98.6%  Vias: 0 <span style="letter-spacing:.2px">(TopRouter)</span></li><li>2 completed Optimize4:   90.1%  Vias: 0</li><li>3 completed Optimize4:   93.0%  Vias: 0</li><li>4 completed Optimize4:   88.7%  Vias: 0</li><li>5 completed Optimize4:   95.8%  Vias: 0</li><li>6 completed Optimize4:   94.4%  Vias: 0</li><li>7 completed Optimize4:   93.0%  Vias: 0</li><li>8 completed Optimize4:   95.8%  Vias: 0</li><li>9 completed Optimize4:   94.4%  Vias: 0</li><li class="on">10 completed Optimize4:   98.6%  Vias: 0</li>
 </ul>
 <div style="margin:6px 0 0 29px;letter-spacing:-.25px;word-spacing:.5px">Percentage may decrease after final processing of polygons.</div>
 <div class="d-flex align-items-center" style="gap:6px;margin:32px 0 0 44px"><button class="btn dlgbtn main">End Job</button><button class="btn dlgbtn">Evaluate</button><button class="btn dlgbtn">&gt;&gt;</button><button class="btn dlgbtn">Cancel</button></div>
</div>
</body>
</html>
